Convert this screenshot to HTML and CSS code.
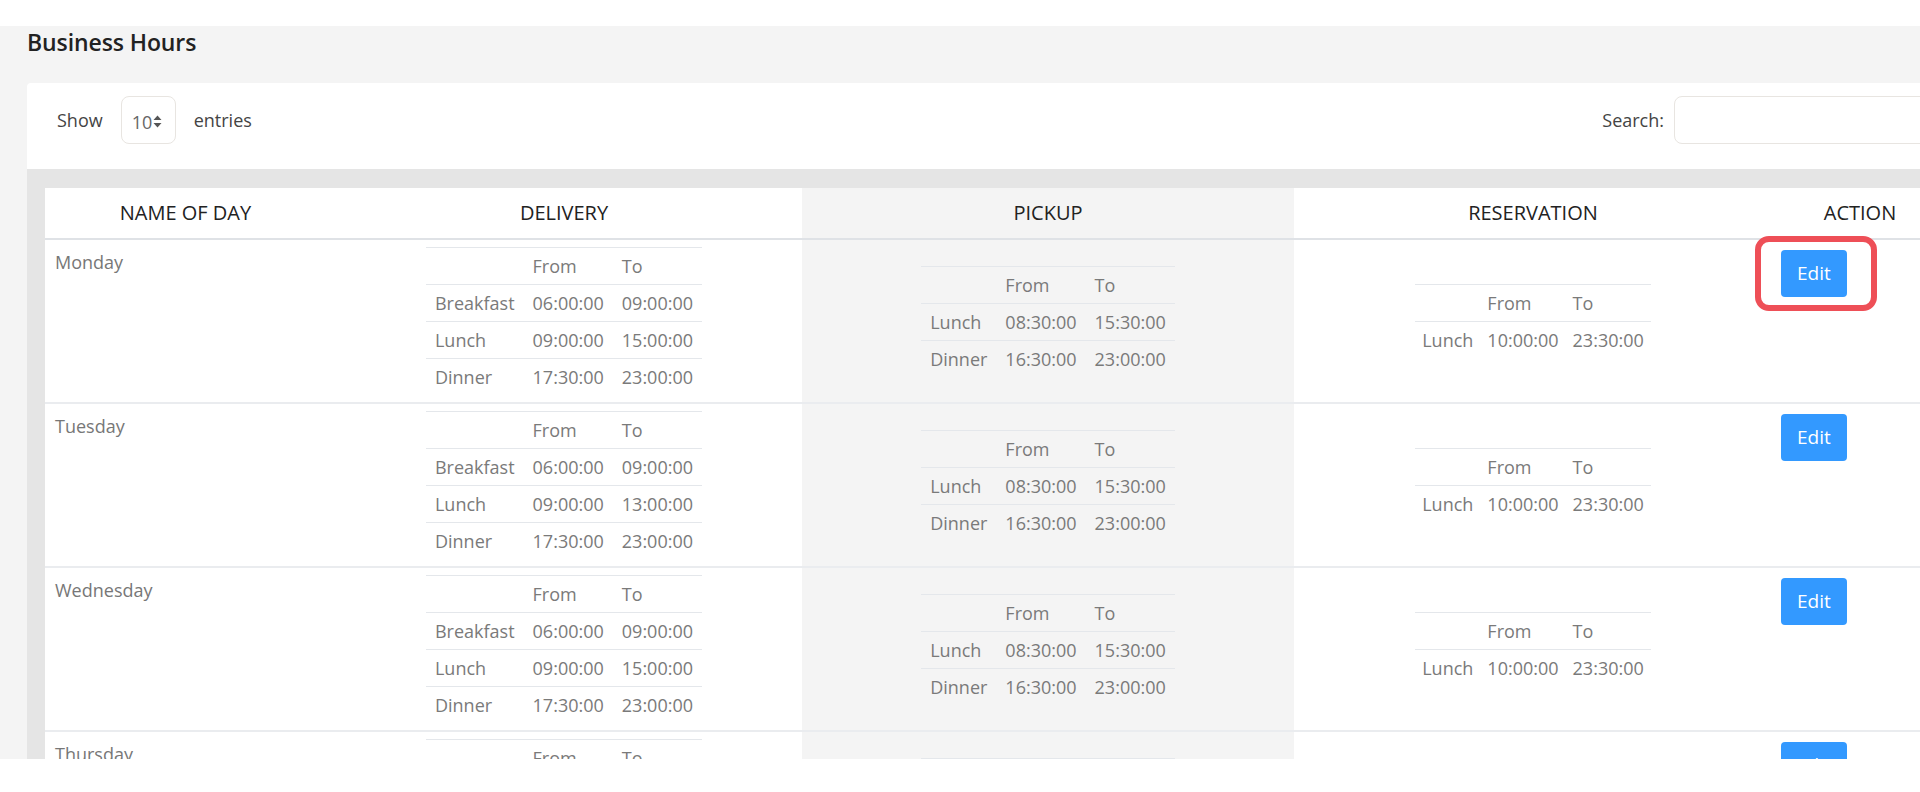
FILE: index.html
```html
<!DOCTYPE html>
<html lang="en">
<head>
<meta charset="utf-8">
<title>Business Hours</title>
<link rel="stylesheet" href="styles.css">
</head>
<body>
<div class="topbar"></div>
<main class="page">
  <h1 class="title">Business Hours</h1>
  <section class="card">
    <div class="controls">
      <div class="length">
        <span>Show</span>
        <div class="select">10<svg class="sort" viewBox="0 0 9 13" width="9" height="13"><path d="M4.5 0.5 L8.5 5 L0.5 5 Z M4.5 12.5 L8.5 8 L0.5 8 Z" fill="#555"/></svg></div>
        <span>entries</span>
      </div>
      <div class="search">
        <span>Search:</span>
        <div class="input"></div>
      </div>
    </div>
    <div class="table-wrap">
      <table class="hours">
        <colgroup>
          <col class="c-name"><col class="c-del"><col class="c-pick"><col class="c-res"><col class="c-act">
        </colgroup>
        <thead>
          <tr>
            <th>NAME OF DAY</th>
            <th>DELIVERY</th>
            <th class="pickup">PICKUP</th>
            <th>RESERVATION</th>
            <th>ACTION</th>
          </tr>
        </thead>
        <tbody>
          <tr>
            <td class="day">Monday</td>
            <td>
              <table class="slots">
                <tr><td></td><td>From</td><td>To</td></tr>
                <tr><td>Breakfast</td><td>06:00:00</td><td>09:00:00</td></tr>
                <tr><td>Lunch</td><td>09:00:00</td><td>15:00:00</td></tr>
                <tr><td>Dinner</td><td>17:30:00</td><td>23:00:00</td></tr>
              </table>
            </td>
            <td class="pickup">
              <table class="slots">
                <tr><td></td><td>From</td><td>To</td></tr>
                <tr><td>Lunch</td><td>08:30:00</td><td>15:30:00</td></tr>
                <tr><td>Dinner</td><td>16:30:00</td><td>23:00:00</td></tr>
              </table>
            </td>
            <td>
              <table class="slots slots-res">
                <tr><td></td><td>From</td><td>To</td></tr>
                <tr><td>Lunch</td><td>10:00:00</td><td>23:30:00</td></tr>
              </table>
            </td>
            <td class="action"><span class="btn-wrap"><button class="edit">Edit</button><span class="highlight"></span></span></td>
          </tr>
          <tr>
            <td class="day">Tuesday</td>
            <td>
              <table class="slots">
                <tr><td></td><td>From</td><td>To</td></tr>
                <tr><td>Breakfast</td><td>06:00:00</td><td>09:00:00</td></tr>
                <tr><td>Lunch</td><td>09:00:00</td><td>13:00:00</td></tr>
                <tr><td>Dinner</td><td>17:30:00</td><td>23:00:00</td></tr>
              </table>
            </td>
            <td class="pickup">
              <table class="slots">
                <tr><td></td><td>From</td><td>To</td></tr>
                <tr><td>Lunch</td><td>08:30:00</td><td>15:30:00</td></tr>
                <tr><td>Dinner</td><td>16:30:00</td><td>23:00:00</td></tr>
              </table>
            </td>
            <td>
              <table class="slots slots-res">
                <tr><td></td><td>From</td><td>To</td></tr>
                <tr><td>Lunch</td><td>10:00:00</td><td>23:30:00</td></tr>
              </table>
            </td>
            <td class="action"><button class="edit">Edit</button></td>
          </tr>
          <tr>
            <td class="day">Wednesday</td>
            <td>
              <table class="slots">
                <tr><td></td><td>From</td><td>To</td></tr>
                <tr><td>Breakfast</td><td>06:00:00</td><td>09:00:00</td></tr>
                <tr><td>Lunch</td><td>09:00:00</td><td>15:00:00</td></tr>
                <tr><td>Dinner</td><td>17:30:00</td><td>23:00:00</td></tr>
              </table>
            </td>
            <td class="pickup">
              <table class="slots">
                <tr><td></td><td>From</td><td>To</td></tr>
                <tr><td>Lunch</td><td>08:30:00</td><td>15:30:00</td></tr>
                <tr><td>Dinner</td><td>16:30:00</td><td>23:00:00</td></tr>
              </table>
            </td>
            <td>
              <table class="slots slots-res">
                <tr><td></td><td>From</td><td>To</td></tr>
                <tr><td>Lunch</td><td>10:00:00</td><td>23:30:00</td></tr>
              </table>
            </td>
            <td class="action"><button class="edit">Edit</button></td>
          </tr>
          <tr>
            <td class="day">Thursday</td>
            <td>
              <table class="slots">
                <tr><td></td><td>From</td><td>To</td></tr>
                <tr><td>Breakfast</td><td>06:00:00</td><td>09:00:00</td></tr>
                <tr><td>Lunch</td><td>09:00:00</td><td>15:00:00</td></tr>
                <tr><td>Dinner</td><td>17:30:00</td><td>23:00:00</td></tr>
              </table>
            </td>
            <td class="pickup">
              <table class="slots">
                <tr><td></td><td>From</td><td>To</td></tr>
                <tr><td>Lunch</td><td>08:30:00</td><td>15:30:00</td></tr>
                <tr><td>Dinner</td><td>16:30:00</td><td>23:00:00</td></tr>
              </table>
            </td>
            <td>
              <table class="slots slots-res">
                <tr><td></td><td>From</td><td>To</td></tr>
                <tr><td>Lunch</td><td>10:00:00</td><td>23:30:00</td></tr>
              </table>
            </td>
            <td class="action"><button class="edit">Edit</button></td>
          </tr>
        </tbody>
      </table>
    </div>
  </section>
</main>
</body>
</html>
```
FILE: styles.css
```css
html, body {
  margin: 0;
  padding: 0;
}
body {
  background: #ffffff;
  font-family: "Open Sans", "Liberation Sans", sans-serif;
  overflow: hidden;
  width: 1920px;
  height: 792px;
}
.topbar {
  height: 26px;
  background: #ffffff;
}
.page {
  height: 733px;
  background: #f4f4f4;
  overflow: hidden;
  padding-left: 27px;
  box-sizing: border-box;
}
.title {
  margin: 0 0 24px 0;
  font-size: 23px;
  font-weight: 600;
  line-height: 33px;
  color: #222222;
  letter-spacing: -0.1px;
}
.card {
  width: 1960px;
  background: #ffffff;
  border-radius: 4px 4px 0 0;
}
.controls {
  display: flex;
  justify-content: space-between;
  align-items: center;
  padding: 13px 24px 25px 30px;
  font-size: 18px;
  color: #444444;
}
.length {
  display: flex;
  align-items: center;
  gap: 18px;
}
.select {
  width: 55px;
  height: 48px;
  box-sizing: border-box;
  border: 1px solid #e8e5e1;
  border-radius: 8px;
  display: flex;
  align-items: center;
  padding: 3px 0 0 10px;
  color: #666666;
  font-size: 18px;
}
.sort {
  margin: 0 0 0 1px;
}
.search {
  display: flex;
  align-items: center;
  gap: 10px;
}
.input {
  width: 289px;
  height: 48px;
  box-sizing: border-box;
  border: 1px solid #e8e5e1;
  border-radius: 8px;
}
.table-wrap {
  background: #e5e5e5;
  padding: 19px 0 0 18px;
}
.hours {
  border-collapse: collapse;
  background: #ffffff;
  table-layout: fixed;
  width: 1903px;
}
.c-name { width: 281px; }
.c-del { width: 476px; }
.c-pick { width: 492px; }
.c-res { width: 478px; }
.c-act { width: 176px; }
.hours th {
  font-size: 20px;
  font-weight: 500;
  line-height: 30px;
  color: #222222;
  padding: 10px 10px;
  text-align: center;
  border-bottom: 2px solid #dfe2e6;
}
.hours > tbody > tr > td {
  padding: 7px 10px;
  vertical-align: middle;
  text-align: center;
  border-bottom: 2px solid #eaecef;
  color: #777777;
  font-size: 18px;
  line-height: 27px;
}
.hours > tbody > tr > td.day {
  text-align: left;
  vertical-align: top;
  padding-top: 9px;
}
.hours > tbody > tr > td.action {
  text-align: left;
  vertical-align: top;
  padding-top: 10px;
  padding-left: 9px;
}
.pickup {
  background: #f4f4f4;
}
.slots {
  margin: 0 auto;
  border-collapse: collapse;
}
.slots td {
  border-top: 1px solid #e4e7eb;
  padding: 5px 9px;
  line-height: 26px;
  font-size: 18px;
  color: #7a7a7a;
  text-align: left;
  white-space: nowrap;
}
.slots-res td {
  padding-left: 7px;
  padding-right: 7px;
}
.btn-wrap {
  position: relative;
  display: inline-block;
}
.edit {
  font-family: "Open Sans", "Liberation Sans", sans-serif;
  font-size: 19px;
  font-weight: 500;
  line-height: 27px;
  padding: 10px 16px;
  background: #3399ff;
  color: #ffffff;
  border: 0;
  border-radius: 4px;
  display: block;
}
.highlight {
  position: absolute;
  left: -26px;
  top: -14px;
  width: 122px;
  height: 75px;
  box-sizing: border-box;
  border: 6px solid #ee4f57;
  border-radius: 14px;
}
```
